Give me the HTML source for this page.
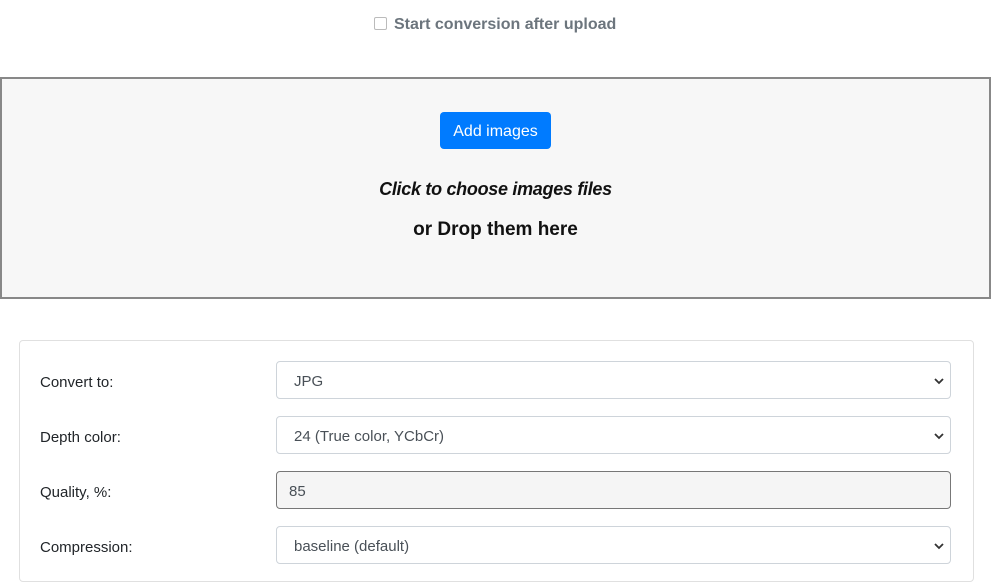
<!DOCTYPE html><html><head><style>
body{margin:0;width:1000px;height:568px;overflow:hidden;background:#fff;font-family:"Liberation Sans",sans-serif;position:relative}
.a{position:absolute}
.sel{position:absolute;left:276px;width:675px;height:38px;border:1px solid #ced4da;border-radius:4px;box-sizing:border-box;font-size:15px;color:#495057;padding:11px 0 0 17px}
.sel svg{position:absolute;right:6px;top:15px}
.lbl{position:absolute;left:40px;font-size:15px;color:#212529}
</style></head><body>
<div class="a" style="left:374px;top:17px;width:11px;height:11px;border:1px solid #bbb;border-radius:2px"></div>
<div class="a" style="left:394px;top:16px;font-size:16px;font-weight:bold;color:#6c757d">Start conversion after upload</div>
<div class="a" style="left:0;top:77px;width:987px;height:218px;border:2px solid #888;background:#f7f7f7"></div>
<div class="a" style="left:440px;top:112px;width:111px;height:37px;background:#007bff;border-radius:4px;color:#fff;font-size:16px;text-align:center;line-height:39px">Add images</div>
<div class="a" style="left:0;width:991px;top:179px;text-align:center;font-size:18px;font-style:italic;font-weight:bold;color:#111;letter-spacing:-0.3px">Click to choose images files</div>
<div class="a" style="left:0;width:991px;top:219px;text-align:center;font-size:19px;font-weight:bold;color:#111">or Drop them here</div>
<div class="a" style="left:19px;top:340px;width:953px;height:240px;border:1px solid #e0e0e0;border-radius:4px"></div>
<div class="lbl" style="top:374px">Convert to:</div>
<div class="sel" style="top:361px">JPG<svg width="10" height="8"><path d="M1 2l4 4 4-4" stroke="#333" stroke-width="1.8" fill="none"/></svg></div>
<div class="lbl" style="top:429px">Depth color:</div>
<div class="sel" style="top:416px">24 (True color, YCbCr)<svg width="10" height="8"><path d="M1 2l4 4 4-4" stroke="#333" stroke-width="1.8" fill="none"/></svg></div>
<div class="lbl" style="top:484px">Quality, %:</div>
<div class="sel" style="top:471px;background:#f5f5f5;border-color:#777;padding-left:12px">85</div>
<div class="lbl" style="top:539px">Compression:</div>
<div class="sel" style="top:526px">baseline (default)<svg width="10" height="8"><path d="M1 2l4 4 4-4" stroke="#333" stroke-width="1.8" fill="none"/></svg></div>
</body></html>
